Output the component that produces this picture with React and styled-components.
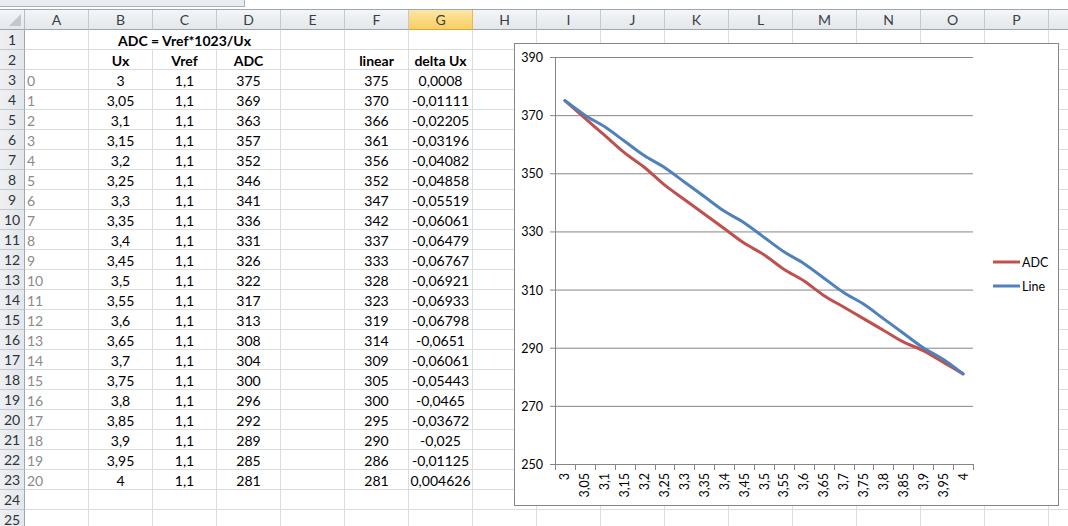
import React from "react";
import styled, { createGlobalStyle } from "styled-components";

const GlobalStyle = createGlobalStyle`
  html, body { margin: 0; padding: 0; background: #ffffff; overflow: hidden; }
  body { font-family: "Lato", "Open Sans", sans-serif; }
`;

const COLS = ["A", "B", "C", "D", "E", "F", "G", "H", "I", "J", "K", "L", "M", "N", "O", "P", ""];
const UX = ["3", "3,05", "3,1", "3,15", "3,2", "3,25", "3,3", "3,35", "3,4", "3,45", "3,5", "3,55", "3,6", "3,65", "3,7", "3,75", "3,8", "3,85", "3,9", "3,95", "4"];
const ADC = [375, 369, 363, 357, 352, 346, 341, 336, 331, 326, 322, 317, 313, 308, 304, 300, 296, 292, 289, 285, 281];
const LIN = [375, 370, 366, 361, 356, 352, 347, 342, 337, 333, 328, 323, 319, 314, 309, 305, 300, 295, 290, 286, 281];
const DELTA = ["0,0008", "-0,01111", "-0,02205", "-0,03196", "-0,04082", "-0,04858", "-0,05519", "-0,06061", "-0,06479", "-0,06767", "-0,06921", "-0,06933", "-0,06798", "-0,0651", "-0,06061", "-0,05443", "-0,0465", "-0,03672", "-0,025", "-0,01125", "0,004626"];

const Page = styled.div`
  position: relative;
  width: 1068px;
  height: 526px;
  overflow: hidden;
  background: #fff;
`;

const FormulaStrip = styled.div`
  display: flex;
  height: 10px;
  box-sizing: border-box;
  border-bottom: 1px solid #9ea6b0;
`;

const NameBox = styled.div`
  width: 245px;
  height: 7px;
  box-sizing: border-box;
  background: #e9ecf0;
  border-bottom: 1px solid #a9b0b9;
  border-right: 1px solid #a9b0b9;
`;

const Sheet = styled.div`
  display: grid;
  grid-template-columns: 25px repeat(17, 64px);
  grid-auto-rows: 20px;
`;

const Corner = styled.div`
  position: relative;
  box-sizing: border-box;
  background: linear-gradient(#f3f5f7, #e4e7eb);
  border-right: 1px solid #b7bdc5;
  border-bottom: 1px solid #9ea6b0;
  &::after {
    content: "";
    position: absolute;
    right: 3px;
    bottom: 3px;
    width: 0;
    height: 0;
    border-left: 12px solid transparent;
    border-bottom: 12px solid #c3c7cc;
  }
`;

const ColHead = styled.div`
  box-sizing: border-box;
  display: flex;
  align-items: center;
  justify-content: center;
  font-family: "Lato", sans-serif;
  font-size: 14px;
  color: #3b3f45;
  background: ${(p) =>
    p.$active ? "linear-gradient(#fce6a4, #f8cf5f)" : "linear-gradient(#f3f5f7, #e4e7eb)"};
  border-right: 1px solid ${(p) => (p.$active ? "#e9b64f" : "#c3c9d0")};
  border-bottom: 1px solid ${(p) => (p.$active ? "#d9a441" : "#9ea6b0")};
`;

const RowHead = styled.div`
  box-sizing: border-box;
  display: flex;
  align-items: center;
  justify-content: center;
  font-family: "Lato", sans-serif;
  font-size: 14px;
  color: #2f3338;
  background: linear-gradient(90deg, #eef0f3, #e4e7eb);
  border-right: 1px solid #9ea6b0;
  border-bottom: 1px solid #c3c9d0;
`;

const Cell = styled.div`
  box-sizing: border-box;
  display: flex;
  align-items: center;
  justify-content: ${(p) => (p.$left ? "flex-start" : "center")};
  padding: ${(p) => (p.$left ? "1px 0 0 2px" : "1px 0 0 0")};
  grid-column: ${(p) => (p.$span ? `span ${p.$span}` : "auto")};
  font-family: "Lato", sans-serif;
  font-size: 14px;
  font-weight: ${(p) => (p.$bold ? 700 : 400)};
  color: ${(p) => (p.$muted ? "#8a8a8a" : "#000")};
  border-right: 1px solid #dadcdd;
  border-bottom: 1px solid #dadcdd;
  white-space: nowrap;
  overflow: visible;
`;

const ChartBox = styled.div`
  position: absolute;
  left: 514px;
  top: 43px;
  width: 545px;
  height: 463px;
  box-sizing: border-box;
  background: #fff;
  border: 1px solid #868686;
`;

const ChartSvg = styled.svg`
  display: block;
  font-family: "Lato", "Open Sans", sans-serif;
`;

/* chart geometry (inside the border) */
const AX = 40;
const TOP = 13;
const BOT = 420;
const RIGHT = 458;
const CW = (RIGHT - AX) / 21;
const yOf = (v) => TOP + ((390 - v) * (BOT - TOP)) / 140;
const xOf = (i) => AX + CW * (i + 0.5);

function smoothPath(vals) {
  const pts = vals.map((v, i) => [xOf(i), yOf(v)]);
  let d = `M${pts[0][0].toFixed(2)},${pts[0][1].toFixed(2)}`;
  for (let i = 0; i < pts.length - 1; i++) {
    const p0 = pts[i - 1] || pts[i];
    const p1 = pts[i];
    const p2 = pts[i + 1];
    const p3 = pts[i + 2] || p2;
    const c1 = [p1[0] + (p2[0] - p0[0]) / 6, p1[1] + (p2[1] - p0[1]) / 6];
    const c2 = [p2[0] - (p3[0] - p1[0]) / 6, p2[1] - (p3[1] - p1[1]) / 6];
    d += ` C${c1[0].toFixed(2)},${c1[1].toFixed(2)} ${c2[0].toFixed(2)},${c2[1].toFixed(2)} ${p2[0].toFixed(2)},${p2[1].toFixed(2)}`;
  }
  return d;
}

function Chart() {
  const yVals = [390, 370, 350, 330, 310, 290, 270, 250];
  return (
    <ChartBox>
      <ChartSvg width="543" height="461" viewBox="0 0 543 461">
        {yVals.map((v) => (
          <g key={v}>
            {v !== 250 && (
              <line x1={AX} x2={RIGHT} y1={yOf(v) + 0.5} y2={yOf(v) + 0.5} stroke="#868686" strokeWidth="1" />
            )}
            <line x1={AX - 5} x2={AX} y1={yOf(v) + 0.5} y2={yOf(v) + 0.5} stroke="#868686" strokeWidth="1" />
            <text x={AX - 12} y={yOf(v) + 0.5} dy="0.36em" textAnchor="end" fontSize="12.5" fill="#000">
              {v}
            </text>
          </g>
        ))}
        <line x1={AX + 0.5} x2={AX + 0.5} y1={TOP} y2={BOT + 0.5} stroke="#868686" strokeWidth="1" />
        <line x1={AX} x2={RIGHT} y1={BOT + 0.5} y2={BOT + 0.5} stroke="#868686" strokeWidth="1" />
        {Array.from({ length: 22 }, (_, i) => (
          <line
            key={i}
            x1={Math.round(AX + CW * i) + 0.5}
            x2={Math.round(AX + CW * i) + 0.5}
            y1={BOT}
            y2={BOT + 6}
            stroke="#868686"
            strokeWidth="1"
          />
        ))}
        {UX.map((t, i) => (
          <text
            key={t}
            transform={`translate(${xOf(i)},${BOT + 9}) rotate(-90)`}
            textAnchor="end"
            dy="0.36em"
            fontSize="12.5"
            fill="#000"
          >
            {t}
          </text>
        ))}
        <path d={smoothPath(ADC)} fill="none" stroke="#c0504d" strokeWidth="3" strokeLinecap="round" strokeLinejoin="round" />
        <path d={smoothPath(LIN)} fill="none" stroke="#4f81bd" strokeWidth="3" strokeLinecap="round" strokeLinejoin="round" />
        <line x1="478" x2="505" y1="218" y2="218" stroke="#c0504d" strokeWidth="3" />
        <text x="507" y="218" dy="0.36em" fontSize="12.5" fill="#000">ADC</text>
        <line x1="478" x2="505" y1="242" y2="242" stroke="#4f81bd" strokeWidth="3" />
        <text x="507" y="242" dy="0.36em" fontSize="12.5" fill="#000">Line</text>
      </ChartSvg>
    </ChartBox>
  );
}

function rowCells(r) {
  const cells = [];
  if (r === 1) {
    cells.push(<Cell key="a" />);
    cells.push(
      <Cell key="bd" $span={3} $bold>
        ADC = Vref*1023/Ux
      </Cell>
    );
    for (let c = 4; c < 17; c++) cells.push(<Cell key={c} />);
    return cells;
  }
  if (r === 2) {
    const vals = ["", "Ux", "Vref", "ADC", "", "linear", "delta Ux"];
    for (let c = 0; c < 17; c++) cells.push(<Cell key={c} $bold>{vals[c] || ""}</Cell>);
    return cells;
  }
  if (r >= 3 && r <= 23) {
    const i = r - 3;
    const vals = [String(i), UX[i], "1,1", String(ADC[i]), "", String(LIN[i]), DELTA[i]];
    for (let c = 0; c < 17; c++) {
      if (c === 0) cells.push(<Cell key={c} $left $muted>{vals[0]}</Cell>);
      else cells.push(<Cell key={c}>{vals[c] || ""}</Cell>);
    }
    return cells;
  }
  for (let c = 0; c < 17; c++) cells.push(<Cell key={c} />);
  return cells;
}

export default function App() {
  return (
    <Page>
      <GlobalStyle />
      <FormulaStrip>
        <NameBox />
      </FormulaStrip>
      <Sheet>
        <Corner />
        {COLS.map((c, i) => (
          <ColHead key={i} $active={c === "G"}>
            {c}
          </ColHead>
        ))}
        {Array.from({ length: 25 }, (_, k) => (
          <React.Fragment key={k}>
            <RowHead>{k + 1}</RowHead>
            {rowCells(k + 1)}
          </React.Fragment>
        ))}
      </Sheet>
      <Chart />
    </Page>
  );
}
